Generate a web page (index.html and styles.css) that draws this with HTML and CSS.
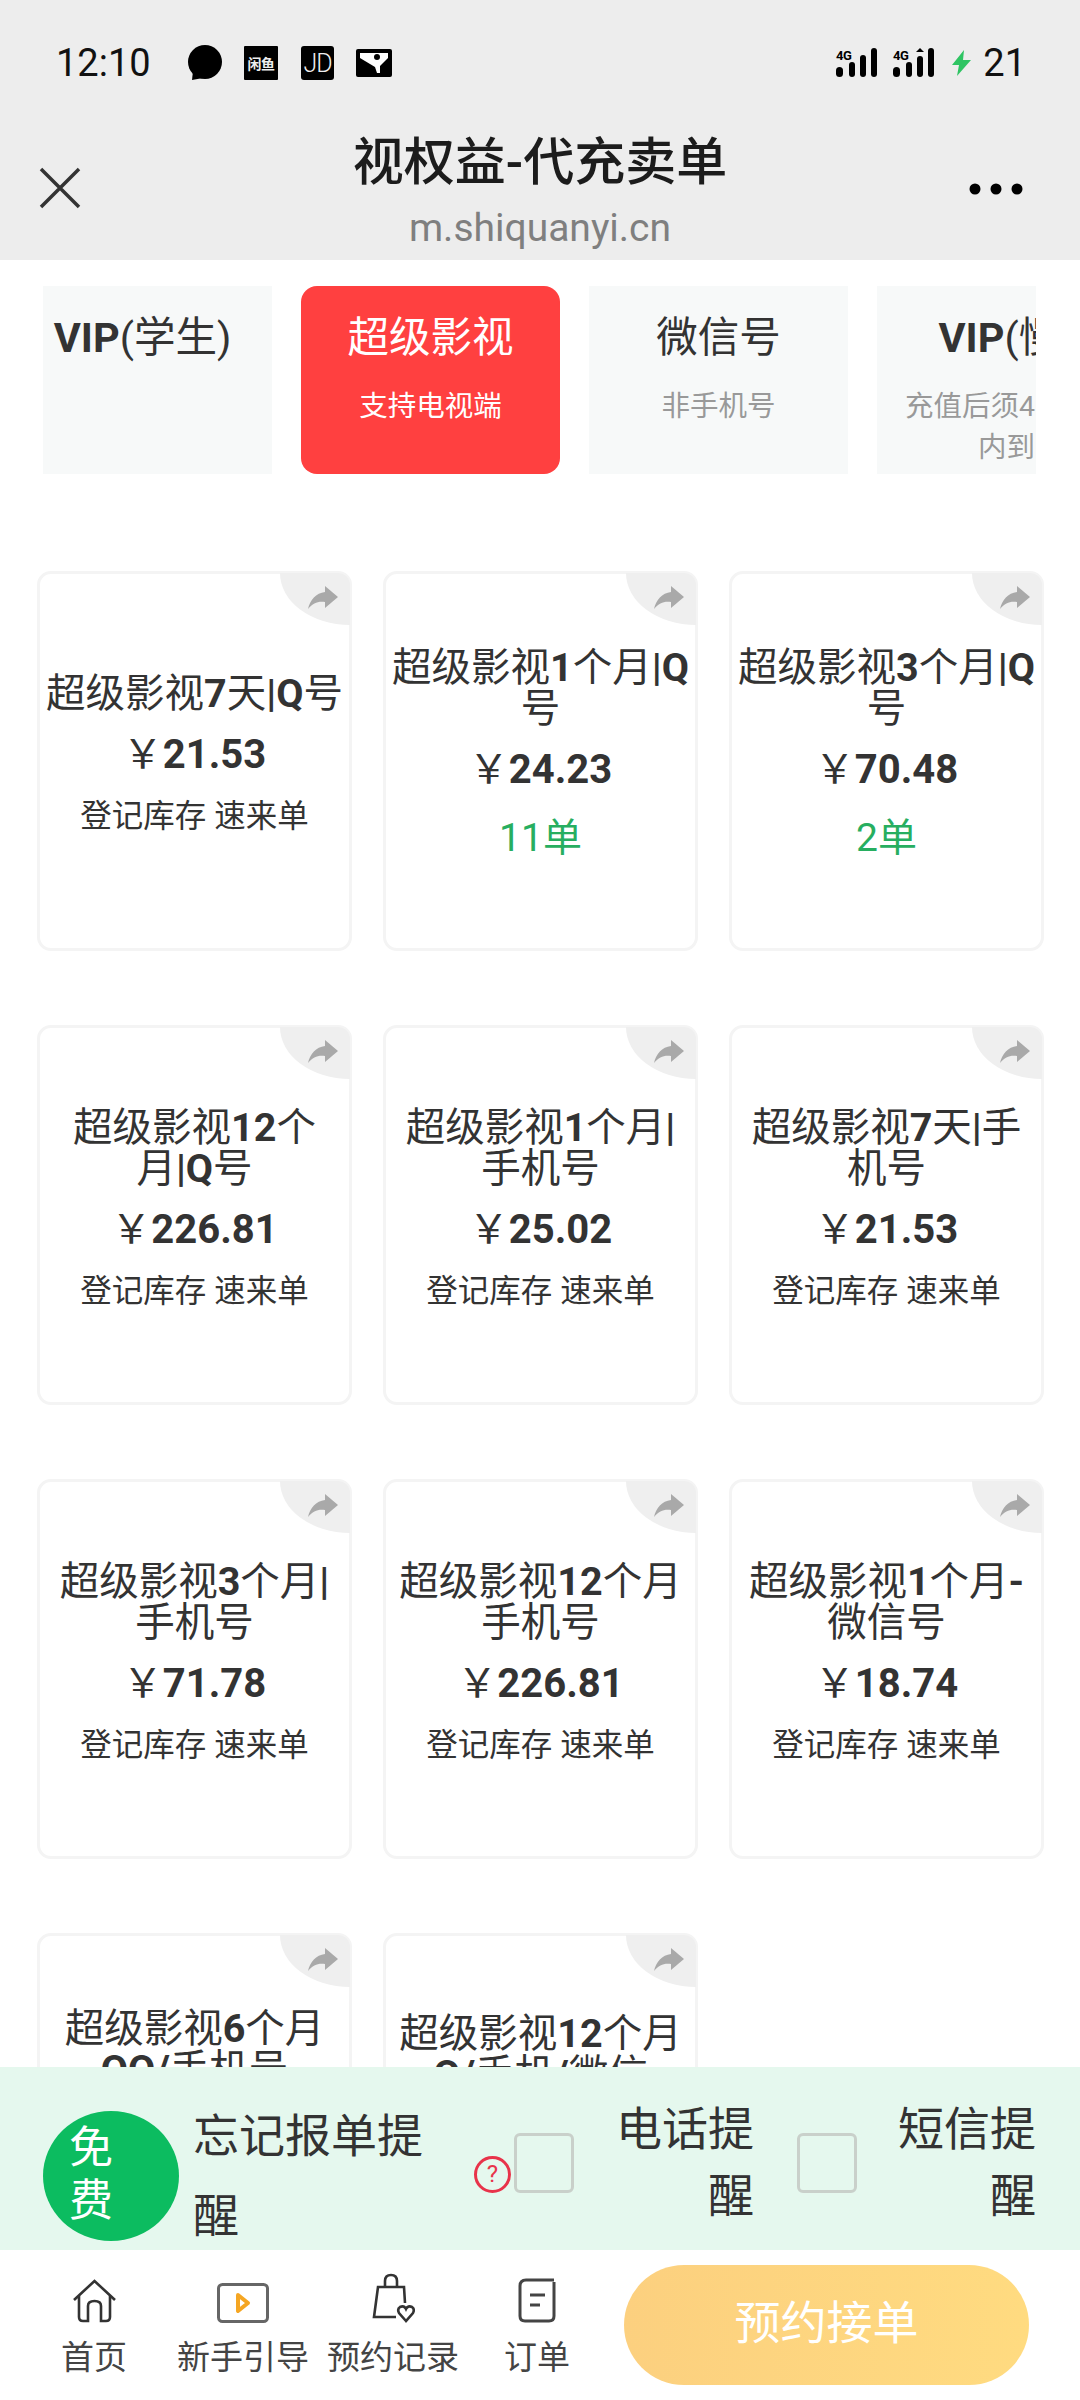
FILE: index.html
```html
<!DOCTYPE html>
<html lang="zh-cn">
  <head>
    <meta charset="UTF-8" />
    <meta name="viewport" content="width=device-width, initial-scale=1.0" />
    <title>视权益-代充卖单</title>
    <link rel="stylesheet" href="styles.css">
  </head>
  <body>
    <svg class="defs" width="0" height="0"><symbol id="arrow" viewBox="0 0 70 52"><path d="M58 24 L45 13 V19 C36 20 30 27 28 36 C33 30 38 28 45 29 V35 Z" /></symbol></svg>
    <div class="page">
      <header class="top">
        <div class="status">
          <span class="time">12:10</span>
          <svg class="ic-bubble" width="36" height="36" viewBox="0 0 36 36"><circle cx="18" cy="17" r="17" /><path d="M6 26 L5 35 L16 33 Z" /></svg>
          <span class="ic-square ic-xianyu">闲鱼</span>
          <span class="ic-square ic-jd">JD</span>
          <svg class="ic-pin" width="36" height="28" viewBox="0 0 36 28"><rect width="36" height="28" rx="2" /><path d="M4 4 H32 V9 L24 17 V24 H21 L19 18 L4 9 Z" fill="#fff" /><circle cx="21" cy="8" r="3" /></svg>
          <span class="status-gap"></span>
          <svg class="ic-signal" width="41" height="30" viewBox="0 0 41 30"><text x="0" y="12" class="net">4G</text><rect x="0" y="19" width="7" height="10" rx="3.5" /><rect x="13" y="14" width="6" height="15" rx="3" /><rect x="24" y="7" width="6" height="22" rx="3" /><rect x="35" y="0" width="6" height="29" rx="3" /></svg>
          <svg class="ic-signal" width="41" height="30" viewBox="0 0 41 30"><text x="0" y="12" class="net">4G</text><rect x="0" y="19" width="7" height="10" rx="3.5" /><rect x="13" y="14" width="6" height="15" rx="3" /><rect x="24" y="8" width="6" height="21" rx="3" /><path d="M27 0 L31 4 H23 Z" /><rect x="35" y="0" width="6" height="29" rx="3" /></svg>
          <svg class="ic-bolt" width="19" height="26" viewBox="0 0 19 26"><path d="M12 0 L0 15 H7 L5 26 L19 10 H11 Z" fill="#2fc463" /></svg>
          <span class="battery">21</span>
        </div>
        <div class="bar">
          <svg class="bar-close" width="42" height="42" viewBox="0 0 42 42"><path d="M2 2 L40 40 M40 2 L2 40" fill="none" stroke="#333" stroke-width="3.5" /></svg>
          <div class="bar-title">
            <div class="bar-name">视权益-代充卖单</div>
            <div class="bar-url">m.shiquanyi.cn</div>
          </div>
          <svg class="bar-more" width="54" height="12" viewBox="0 0 54 12"><circle cx="6" cy="6" r="5.5" /><circle cx="27" cy="6" r="5.5" /><circle cx="48" cy="6" r="5.5" /></svg>
        </div>
      </header>

      <main class="content">
        <div class="tabs">
          <div class="tab tab-first">
            <div class="tab-name"><b>VIP</b>(学生)</div>
          </div>
          <div class="tab tab-on">
            <div class="tab-name">超级影视</div>
            <div class="tab-sub">支持电视端</div>
          </div>
          <div class="tab">
            <div class="tab-name">微信号</div>
            <div class="tab-sub">非手机号</div>
          </div>
          <div class="tab">
            <div class="tab-name"><b>VIP</b>(慢)</div>
            <div class="tab-sub">充值后须48小时内到</div>
          </div>
        </div>

        <div class="goods">
          <div class="card">
            <svg class="share"><use href="#arrow" /></svg>
            <div class="card-name">超级影视<b>7</b>天<b>|Q</b>号</div>
            <div class="card-price">￥<b>21.53</b></div>
            <div class="card-note">登记库存 速来单</div>
          </div>
          <div class="card">
            <svg class="share"><use href="#arrow" /></svg>
            <div class="card-name">超级影视<b>1</b>个月<b>|Q</b><br />号</div>
            <div class="card-price">￥<b>24.23</b></div>
            <div class="card-sold">11单</div>
          </div>
          <div class="card">
            <svg class="share"><use href="#arrow" /></svg>
            <div class="card-name">超级影视<b>3</b>个月<b>|Q</b><br />号</div>
            <div class="card-price">￥<b>70.48</b></div>
            <div class="card-sold">2单</div>
          </div>

          <div class="card">
            <svg class="share"><use href="#arrow" /></svg>
            <div class="card-name">超级影视<b>12</b>个<br />月<b>|Q</b>号</div>
            <div class="card-price">￥<b>226.81</b></div>
            <div class="card-note">登记库存 速来单</div>
          </div>
          <div class="card">
            <svg class="share"><use href="#arrow" /></svg>
            <div class="card-name">超级影视<b>1</b>个月<b>|</b><br />手机号</div>
            <div class="card-price">￥<b>25.02</b></div>
            <div class="card-note">登记库存 速来单</div>
          </div>
          <div class="card">
            <svg class="share"><use href="#arrow" /></svg>
            <div class="card-name">超级影视<b>7</b>天<b>|</b>手<br />机号</div>
            <div class="card-price">￥<b>21.53</b></div>
            <div class="card-note">登记库存 速来单</div>
          </div>

          <div class="card">
            <svg class="share"><use href="#arrow" /></svg>
            <div class="card-name">超级影视<b>3</b>个月<b>|</b><br />手机号</div>
            <div class="card-price">￥<b>71.78</b></div>
            <div class="card-note">登记库存 速来单</div>
          </div>
          <div class="card">
            <svg class="share"><use href="#arrow" /></svg>
            <div class="card-name">超级影视<b>12</b>个月<br />手机号</div>
            <div class="card-price">￥<b>226.81</b></div>
            <div class="card-note">登记库存 速来单</div>
          </div>
          <div class="card">
            <svg class="share"><use href="#arrow" /></svg>
            <div class="card-name">超级影视<b>1</b>个月<b>-</b><br />微信号</div>
            <div class="card-price">￥<b>18.74</b></div>
            <div class="card-note">登记库存 速来单</div>
          </div>

          <!-- 最后一行被提醒栏挡住 -->
          <div class="card card-cut">
            <svg class="share"><use href="#arrow" /></svg>
            <div class="card-name">超级影视<b>6</b>个月<br /><b>QQ/</b>手机号</div>
          </div>
          <div class="card card-cut card-cut-low">
            <svg class="share"><use href="#arrow" /></svg>
            <div class="card-name">超级影视<b>12</b>个月<br /><b>Q/</b>手机<b>/</b>微信</div>
          </div>
        </div>
      </main>

      <section class="remind">
        <div class="free">免费</div>
        <div class="remind-main">忘记报单提<br />醒</div>
        <span class="help">?</span>
        <span class="check"></span>
        <div class="remind-side remind-phone">电话提<br />醒</div>
        <span class="check check-sms"></span>
        <div class="remind-side remind-sms">短信提<br />醒</div>
      </section>

      <nav class="nav">
        <div class="nav-item nav-home">
          <div class="nav-icon">
            <svg width="45" height="44" viewBox="0 0 45 44" fill="none" stroke="#333" stroke-width="2.6"><path d="M2 21 L22.5 2 L43 21" /><path d="M7 17 V38 Q7 42 11 42 H16 V27 Q16 22 22.5 22 Q29 22 29 27 V42 H34 Q38 42 38 38 V17" /></svg>
          </div>
          <span>首页</span>
        </div>
        <div class="nav-item nav-guide">
          <div class="nav-icon">
            <svg width="52" height="40" viewBox="0 0 52 40" fill="none"><rect x="1.5" y="1.5" width="49" height="37" rx="4" stroke="#666" stroke-width="3" /><path d="M21 12 L31 20 L21 28 Z" stroke="#f5a623" stroke-width="4" stroke-linejoin="round" /></svg>
          </div>
          <span>新手引导</span>
        </div>
        <div class="nav-item nav-book">
          <div class="nav-icon">
            <svg width="43" height="50" viewBox="0 0 43 50" fill="none" stroke="#333" stroke-width="2.6"><path d="M24 44 H2 L6 14 H32 L33 30" /><path d="M13 14 V8 Q13 2 19 2 Q25 2 25 8 V14" /><path d="M34 48 L27 40 Q25 36 28 34 Q32 32 34 36 Q36 32 40 34 Q43 36 41 40 Z" /></svg>
          </div>
          <span>预约记录</span>
        </div>
        <div class="nav-item nav-order">
          <div class="nav-icon">
            <svg width="38" height="45" viewBox="0 0 38 45" fill="none" stroke="#444" stroke-width="3"><path d="M36 2 H8 Q2 2 2 8 V38 Q2 43 7 43 H31 Q36 43 36 38 V4" /><path d="M12 17 H27 M12 27 H22" /></svg>
          </div>
          <span>订单</span>
        </div>
        <button class="book-btn">预约接单</button>
      </nav>
    </div>
  </body>
</html>
```

FILE: styles.css
```css
* {
  box-sizing: border-box;
}
body {
  margin: 0;
  background-color: #fff;
  color: #333;
  font-family: Roboto, "Noto Sans CJK SC", sans-serif;
}
.defs {
  display: block;
}
.page {
  width: 1080px;
  height: 2400px;
  display: flex;
  flex-direction: column;
  overflow: hidden;
}

/* 顶部 */
.top {
  flex: 0 0 260px;
  padding-top: 45px;
  background: #ededed;
}
.status {
  display: flex;
  align-items: center;
  height: 36px;
  padding: 0 54px 0 56px;
  color: #111;
}
.time {
  width: 131px;
  font-size: 38px;
  line-height: 36px;
}
.ic-bubble {
  flex: none;
}
.ic-square {
  flex: none;
  display: flex;
  align-items: center;
  justify-content: center;
  background: #000;
  color: #eee;
  height: 34px;
}
.ic-xianyu {
  width: 34px;
  margin-left: 21px;
  font-size: 14px;
  font-weight: 700;
  letter-spacing: -0.5px;
  white-space: nowrap;
  border-radius: 1px;
}
.ic-jd {
  width: 33px;
  margin-left: 23px;
  font-size: 25px;
  font-weight: 300;
  letter-spacing: -1px;
  border-radius: 3px;
}
.ic-pin {
  flex: none;
  margin-left: 22px;
}
.status-gap {
  flex: 1;
}
.ic-signal {
  flex: none;
  margin-right: 16px;
  overflow: visible;
}
.net {
  font-size: 13px;
  font-weight: 700;
  letter-spacing: -0.5px;
}
.ic-bolt {
  flex: none;
  margin-left: 2px;
}
.battery {
  margin-left: 12px;
  font-size: 38px;
  line-height: 36px;
}
.bar {
  display: grid;
  grid-template-columns: 1fr auto 1fr;
  align-items: center;
  margin-top: 52px;
  padding: 0 39px;
}
.bar-close {
  margin-bottom: 8px;
}
.bar-more {
  justify-self: end;
  margin: 0 18px 6px 0;
}
.bar-title {
  text-align: center;
}
.bar-name {
  font-size: 51px;
  line-height: 60px;
  font-weight: 500;
  color: #1c1c1c;
}
.bar-url {
  margin-top: 13px;
  font-size: 39px;
  line-height: 44px;
  color: #7f7f7f;
}

/* 分类 */
.content {
  flex: 1;
  min-height: 0;
  overflow: hidden;
}
.tabs {
  display: flex;
  gap: 29px;
  width: 993px;
  height: 188px;
  margin: 26px 0 0 43px;
  overflow: hidden;
}
.tab {
  flex: 0 0 259px;
  padding: 22px 20px 0;
  background: #f7f9f9;
  text-align: center;
}
.tab-first {
  margin-left: -30px;
}
.tab-name {
  font-size: 41.5px;
  line-height: 60px;
  white-space: nowrap;
  color: #333;
}
.tab-sub {
  margin-top: 18px;
  font-size: 28.5px;
  line-height: 41px;
  color: #999;
}
.tab-on {
  background: #ff4040;
  border-radius: 16px;
}
.tab-on .tab-name,
.tab-on .tab-sub {
  color: #fff;
}

/* 商品 */
.goods {
  display: grid;
  grid-template-columns: repeat(3, 315px);
  grid-auto-rows: 380px;
  gap: 74px 31px;
  margin-top: 97px;
  padding-left: 37px;
}
.card {
  position: relative;
  display: flex;
  flex-direction: column;
  align-items: center;
  justify-content: center;
  padding-bottom: 10px;
  border: 3px solid #f4f4f4;
  border-radius: 14px;
  text-align: center;
}
.card-cut {
  justify-content: flex-start;
  padding-top: 72px;
}
.card-cut-low {
  padding-top: 77px;
}
.share {
  position: absolute;
  top: -1px;
  right: -1px;
  width: 70px;
  height: 52px;
  background: #efefef;
  border-radius: 0 12px 0 70px / 0 12px 0 52px;
  fill: #a9a9a9;
}
.card-name {
  font-size: 39.5px;
  line-height: 41px;
  white-space: nowrap;
}
.card-price {
  margin-top: 18px;
  font-size: 40px;
  line-height: 46px;
}
.card-note {
  margin-top: 17px;
  font-size: 31.5px;
  line-height: 44px;
}
.card-sold {
  margin-top: 18px;
  font-size: 39px;
  line-height: 54px;
  color: #27ae60;
}

/* 提醒 */
.remind {
  flex: 0 0 183px;
  display: flex;
  align-items: flex-start;
  padding: 26px 0 0 43px;
  background: #e5f8ee;
  color: #333;
  overflow: hidden;
}
.free {
  flex: none;
  width: 136px;
  height: 130px;
  margin-top: 18px;
  padding: 11px 26px 0;
  border-radius: 50%;
  background: #0cbc60;
  color: #fff;
  font-size: 44px;
  line-height: 53px;
}
.remind-main {
  flex: none;
  width: 278px;
  margin-left: 14px;
  padding-top: 3px;
  font-size: 46px;
  line-height: 80px;
}
.help {
  flex: none;
  width: 37px;
  height: 37px;
  margin: 63px 0 0 3px;
  border: 3px solid #e8334a;
  border-radius: 50%;
  color: #e8334a;
  font-size: 24px;
  line-height: 31px;
  text-align: center;
}
.check {
  flex: none;
  width: 60px;
  height: 60px;
  margin: 40px 0 0 3px;
  border: 3px solid #c9d0ca;
  border-radius: 6px;
}
.check-sms {
  margin-left: 43px;
}
.remind-side {
  flex: none;
  padding-top: 3px;
  font-size: 46px;
  line-height: 67px;
  text-align: right;
}
.remind-phone {
  width: 180px;
}
.remind-sms {
  width: 179px;
}

/* 底部导航 */
.nav {
  flex: 0 0 150px;
  display: flex;
  padding-left: 22px;
  background: #fff;
}
.nav-item {
  display: flex;
  flex-direction: column;
  align-items: center;
  padding-top: 23px;
  font-size: 33px;
  line-height: 40px;
  color: #444;
  white-space: nowrap;
}
.nav-icon {
  display: flex;
  align-items: flex-end;
  height: 50px;
  margin-bottom: 15px;
}
.nav-home {
  width: 144px;
}
.nav-guide {
  width: 154px;
}
.nav-book {
  width: 146px;
}
.nav-order {
  width: 142px;
}
.book-btn {
  width: 405px;
  height: 120px;
  margin: 15px 0 0 16px;
  padding: 0 0 12px;
  border: none;
  border-radius: 60px;
  background: linear-gradient(90deg, #fcd07f, #ffdb80);
  color: #fff;
  font-family: inherit;
  font-size: 46px;
}
```
